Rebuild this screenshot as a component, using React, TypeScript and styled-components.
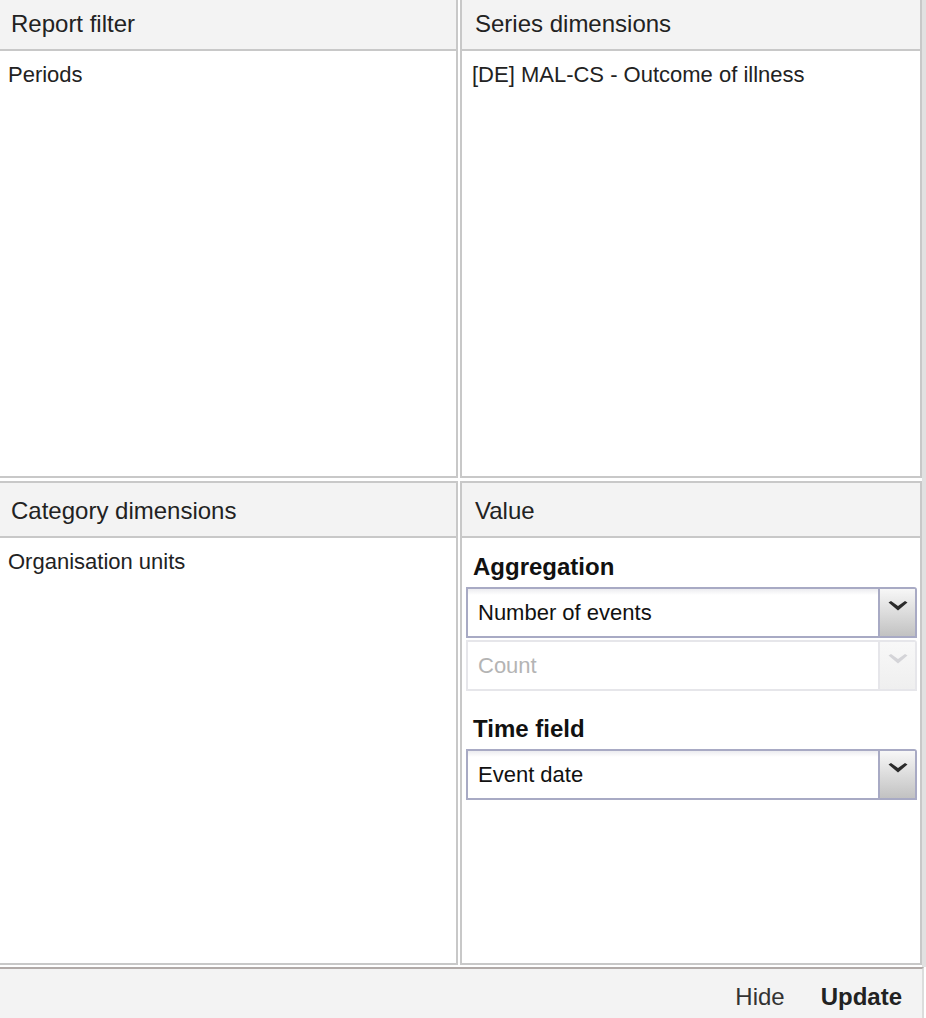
import styled, { createGlobalStyle } from "styled-components";

const GlobalStyle = createGlobalStyle`
	html, body {
		margin: 0;
		padding: 0;
		background: #fff;
	}
	body {
		font-family: "Liberation Sans", Arial, Helvetica, sans-serif;
		color: #222;
		overflow: hidden;
	}
`;

type Option = { label: string; disabled?: boolean };

const Chevron = ({ disabled }: { disabled?: boolean }) => (
	<svg width="22" height="12" viewBox="0 0 22 12">
		<path
			d="M1.5 2.5L4 1L11 6L18 1L20.5 2.5L11 10.5Z"
			fill={disabled ? "#d4d4d8" : "#2b2b2b"}
		/>
	</svg>
);

const Combo = ({ label, disabled }: Option) => (
	<ComboBox disabled={disabled}>
		<ComboText disabled={disabled}>{label}</ComboText>
		<ComboTrigger disabled={disabled}>
			<Chevron disabled={disabled} />
		</ComboTrigger>
	</ComboBox>
);

export default function App() {
	return (
		<Page>
			<GlobalStyle />
			<Workspace>
				<Layout>
					<Panel>
						<PanelHeader>Report filter</PanelHeader>
						<PanelBody>
							<DimItem>Periods</DimItem>
						</PanelBody>
					</Panel>
					<Panel>
						<PanelHeader>Series dimensions</PanelHeader>
						<PanelBody>
							<DimItem>[DE] MAL-CS - Outcome of illness</DimItem>
						</PanelBody>
					</Panel>
					<Panel>
						<PanelHeader>Category dimensions</PanelHeader>
						<PanelBody>
							<DimItem>Organisation units</DimItem>
						</PanelBody>
					</Panel>
					<Panel>
						<PanelHeader>Value</PanelHeader>
						<ValueBody>
							<FieldLabel>Aggregation</FieldLabel>
							<Combo label="Number of events" />
							<Combo label="Count" disabled />
							<FieldLabel spaced>Time field</FieldLabel>
							<Combo label="Event date" />
						</ValueBody>
					</Panel>
				</Layout>
			</Workspace>
			<Footer>
				<FooterButton>Hide</FooterButton>
				<FooterButton primary>Update</FooterButton>
			</Footer>
		</Page>
	);
}

const Page = styled.div`
	width: 926px;
	height: 1018px;
	overflow: hidden;
	display: flex;
	flex-direction: column;
	background: #fff;
`;

const Workspace = styled.div`
	width: 922px;
	border-right: 4px solid #e1e1e1;
	padding-bottom: 2px;
	overflow: hidden;
`;

const Layout = styled.div`
	display: grid;
	grid-template-columns: 462px 462px;
	grid-template-rows: 484px 484px;
	column-gap: 2px;
	row-gap: 3px;
	margin-left: -4px;
	margin-top: -6px;
`;

const Panel = styled.div`
	border: 2px solid #c8c8c8;
	background: #fff;
	display: flex;
	flex-direction: column;
	min-height: 0;
	overflow: hidden;
`;

const PanelHeader = styled.div`
	height: 55px;
	flex: none;
	box-sizing: border-box;
	background: #f3f3f3;
	border-bottom: 2px solid #c8c8c8;
	display: flex;
	align-items: center;
	padding: 2px 0 0 13px;
	font-size: 24px;
	color: #222;
`;

const PanelBody = styled.div`
	flex: 1;
	padding-top: 10px;
`;

const DimItem = styled.div`
	font-size: 22px;
	line-height: 28px;
	padding-left: 10px;
	color: #222;
`;

const ValueBody = styled.div`
	flex: 1;
	display: flex;
	flex-direction: column;
	gap: 2px;
	padding: 15px 3px 0 4px;
`;

const FieldLabel = styled.div<{ spaced?: boolean }>`
	font-size: 24px;
	font-weight: 700;
	line-height: 28px;
	color: #111;
	padding-left: 7px;
	margin-top: ${({ spaced }) => (spaced ? "22px" : "0")};
	margin-bottom: 4px;
`;

const ComboBox = styled.div<{ disabled?: boolean }>`
	height: 51px;
	box-sizing: border-box;
	display: flex;
	border: 2px solid ${({ disabled }) => (disabled ? "#e6e6ea" : "#a8aac4")};
	border-top-right-radius: 3px;
	background: #fff;
`;

const ComboText = styled.div<{ disabled?: boolean }>`
	flex: 1;
	display: flex;
	align-items: center;
	padding-left: 10px;
	font-size: 22px;
	color: ${({ disabled }) => (disabled ? "#b4b4b4" : "#111")};
	background: ${({ disabled }) =>
		disabled ? "#fff" : "linear-gradient(#ececf0 0, #fff 6px)"};
`;

const ComboTrigger = styled.div<{ disabled?: boolean }>`
	width: 37px;
	flex: none;
	display: flex;
	justify-content: center;
	padding-top: 11px;
	box-sizing: border-box;
	border-left: 2px solid ${({ disabled }) => (disabled ? "#e6e6ea" : "#a8aac4")};
	background: ${({ disabled }) =>
		disabled
			? "linear-gradient(#f8f8f8, #efefef)"
			: "linear-gradient(#f7f7f7, #c2c2c2)"};
`;

const Footer = styled.div`
	flex: 1;
	width: 924px;
	box-sizing: border-box;
	background: #f3f3f3;
	border-top: 2px solid #b1aaa8;
	border-right: 2px solid #dcdcdc;
	display: flex;
	justify-content: flex-end;
	align-items: flex-start;
	gap: 36px;
	padding: 14px 20px 0 0;
`;

const FooterButton = styled.div<{ primary?: boolean }>`
	font-size: 24px;
	line-height: 28px;
	font-weight: ${({ primary }) => (primary ? 700 : 400)};
	color: ${({ primary }) => (primary ? "#222" : "#333")};
	cursor: pointer;
`;
